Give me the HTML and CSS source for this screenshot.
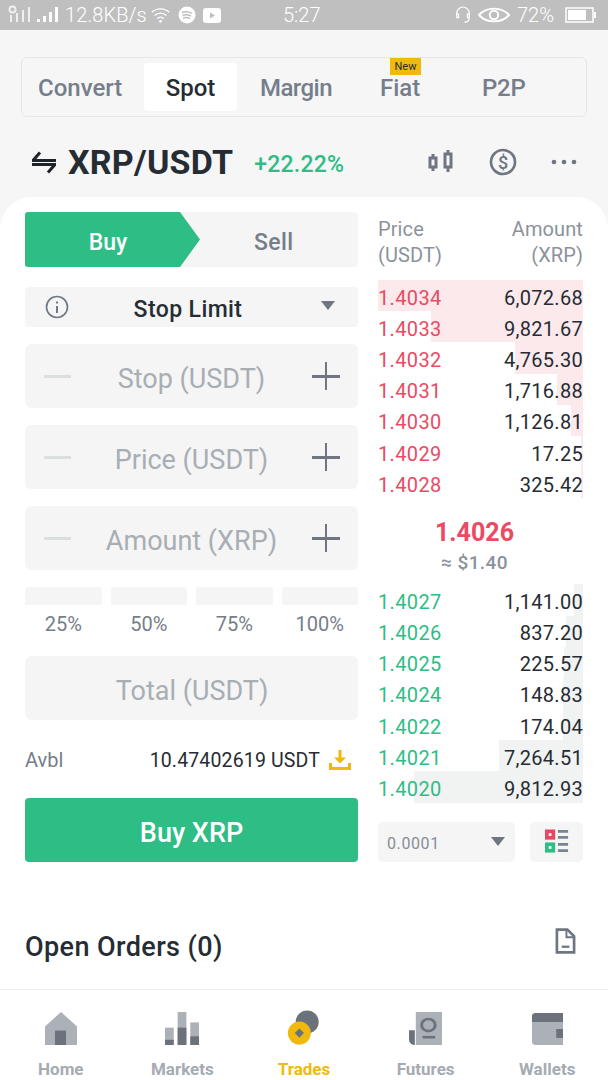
FILE: index.html
```html
<!DOCTYPE html>
<html lang="en">
<head>
<meta charset="utf-8">
<title>Spot</title>
<link rel="stylesheet" href="styles.css">
</head>
<body>
<div class="phone">
  <header class="status">
    <div class="st-left">
      <svg class="st-sig" width="24" height="20" viewBox="0 0 24 20"><g fill="#fff" opacity=".75"><circle cx="4.500" cy="4.500" r="3" fill="none" stroke="#fff" stroke-width="2"/><rect x="2" y="10" width="2" height="7"/><rect x="8" y="8" width="2" height="9"/><rect x="14" y="5" width="2" height="12"/><rect x="20" y="2" width="2" height="15"/></g></svg>
      <svg class="st-sig2" width="22" height="18" viewBox="0 0 22 18"><g fill="#fff"><rect x="0" y="13" width="3" height="3"/><rect x="6" y="10" width="3" height="6"/><rect x="12" y="6" width="3" height="10"/><rect x="18" y="1" width="3" height="15"/></g></svg>
      <span class="st-speed">12.8KB/s</span>
      <svg class="st-wifi" width="20" height="20" viewBox="0 0 22 20"><g fill="none" stroke="#fff" stroke-width="1.600"><path d="M1 7a14 14 0 0 1 19 0"/><path d="M4 10.500a9.500 9.500 0 0 1 13 0"/><path d="M7 14a5 5 0 0 1 7 0"/></g><circle cx="10.500" cy="17" r="1.600" fill="#fff"/></svg>
      <svg class="st-app" width="18" height="18" viewBox="0 0 18 18"><circle cx="9" cy="9" r="8.500" fill="#fff"/><g fill="none" stroke="#bfbfbf" stroke-width="1.500"><path d="M4 6.500c3-1 7-.8 10 .8"/><path d="M4.500 9.300c2.700-.8 6-.6 8.500.7"/><path d="M5 12c2.200-.6 5-.5 7 .6"/></g></svg>
      <svg class="st-app" width="18" height="15" viewBox="0 0 18 15"><rect width="18" height="15" rx="3" fill="#fff"/><path d="M7 4.500v6l5-3z" fill="#bfbfbf"/></svg>
    </div>
    <span class="st-time">5:27</span>
    <div class="st-right">
      <svg width="16" height="22" viewBox="0 0 18 22"><path d="M2 14V9a7 7 0 0 1 14 0v5c0 3-2 5-5 5M2 14h2v-4H2M16 14h-2v-4h2" fill="none" stroke="#fff" stroke-width="1.400" stroke-linecap="round"/></svg>
      <svg width="32" height="18" viewBox="0 0 34 18"><path d="M1 9c8-9 24-9 32 0c-8 9-24 9-32 0z" fill="none" stroke="#fff" stroke-width="2"/><circle cx="17" cy="9" r="4.500" fill="none" stroke="#fff" stroke-width="2"/></svg>
      <span class="st-batt">72%</span>
      <svg width="32" height="16" viewBox="0 0 32 16"><rect x="1" y="1" width="27" height="14" fill="none" stroke="#fff" stroke-width="1.500"/><rect x="3" y="3" width="18" height="10" fill="#fff"/><rect x="29" y="5" width="2" height="6" fill="#fff"/></svg>
    </div>
  </header>

  <nav class="tabs">
    <span class="tab tab-convert">Convert</span>
    <span class="tab tab-spot">Spot</span>
    <span class="tab tab-margin">Margin</span>
    <span class="tab tab-fiat">Fiat<em class="badge">New</em></span>
    <span class="tab tab-p2p">P2P</span>
  </nav>

  <section class="pair">
    <svg class="swap" width="26" height="24" viewBox="0 0 26 24"><path d="M1 10.500h24M2 10.500l7-8M25 14.500H1M24 14.500l-7 8" fill="none" stroke="#1e2329" stroke-width="3"/></svg>
    <h1 class="symbol">XRP/USDT</h1>
    <span class="change">+22.22%</span>
    <div class="pair-icons">
      <svg width="26" height="26" viewBox="0 0 26 26"><g fill="none" stroke="#6f7682" stroke-width="3"><rect x="2" y="9" width="6" height="9"/><rect x="17" y="5" width="6" height="13"/></g><path d="M5 5v4M5 18v4M20 1v4M20 18v5" stroke="#6f7682" stroke-width="3"/></svg>
      <svg class="ic-dollar" width="28" height="28" viewBox="0 0 28 28"><circle cx="14" cy="14" r="12" fill="none" stroke="#6f7682" stroke-width="2.600"/><text x="14" y="20.500" text-anchor="middle" class="dollar">$</text></svg>
      <svg width="28" height="8" viewBox="0 0 28 8"><g fill="#6f7682"><circle cx="4" cy="4" r="2.300"/><circle cx="14" cy="4" r="2.300"/><circle cx="24" cy="4" r="2.300"/></g></svg>
    </div>
  </section>

  <main class="card">
    <div class="trade">
      <div class="form">
        <div class="side">
          <svg class="side-bg" width="175" height="55" viewBox="0 0 175 55"><path d="M3 0H155L175 27.500L155 55H3a3 3 0 0 1-3-3V3a3 3 0 0 1 3-3z" fill="#2ebd85"/></svg>
          <span class="side-buy">Buy</span>
          <span class="side-sell">Sell</span>
        </div>
        <div class="select">
          <svg width="24" height="24" viewBox="0 0 24 24"><circle cx="12" cy="12" r="10.500" fill="none" stroke="#707a86" stroke-width="1.700"/><path d="M12 11v7M12 6.500v2" stroke="#707a86" stroke-width="2"/></svg>
          <span class="select-label">Stop Limit</span>
          <i class="caret"></i>
        </div>
        <div class="field">
          <i class="minus"></i><span class="ph">Stop (USDT)</span><i class="plus"></i>
        </div>
        <div class="field">
          <i class="minus"></i><span class="ph">Price (USDT)</span><i class="plus"></i>
        </div>
        <div class="field">
          <i class="minus"></i><span class="ph">Amount (XRP)</span><i class="plus"></i>
        </div>
        <div class="pcts">
          <div class="pct"><i></i><span>25%</span></div>
          <div class="pct"><i></i><span>50%</span></div>
          <div class="pct"><i></i><span>75%</span></div>
          <div class="pct"><i></i><span>100%</span></div>
        </div>
        <div class="field total"><span class="ph">Total (USDT)</span></div>
        <div class="avbl">
          <span class="avbl-k">Avbl</span>
          <span class="avbl-v">10.47402619 USDT</span>
          <svg width="22" height="22" viewBox="0 0 22 22"><path d="M11 1v10" stroke="#f0b90b" stroke-width="3"/><path d="M5 8.500l6 6 6-6z" fill="#f0b90b"/><path d="M1.500 14v5.500h19V14" fill="none" stroke="#f0b90b" stroke-width="3"/></svg>
        </div>
        <div class="buy-btn">Buy XRP</div>
      </div>

      <aside class="book">
        <div class="book-head">
          <span>Price<br>(USDT)</span>
          <span class="r">Amount<br>(XRP)</span>
        </div>
        <div class="rows asks">
          <div class="row" style="--d:205px"><b>1.4034</b><span>6,072.68</span></div>
          <div class="row" style="--d:152px"><b>1.4033</b><span>9,821.67</span></div>
          <div class="row" style="--d:68px"><b>1.4032</b><span>4,765.30</span></div>
          <div class="row" style="--d:26px"><b>1.4031</b><span>1,716.88</span></div>
          <div class="row" style="--d:12px"><b>1.4030</b><span>1,126.81</span></div>
          <div class="row" style="--d:2px"><b>1.4029</b><span>17.25</span></div>
          <div class="row" style="--d:2px"><b>1.4028</b><span>325.42</span></div>
        </div>
        <div class="mid">
          <strong>1.4026</strong>
          <span>≈ $1.40</span>
        </div>
        <div class="rows bids">
          <div class="row" style="--d:9px"><b>1.4027</b><span>1,141.00</span></div>
          <div class="row" style="--d:17px"><b>1.4026</b><span>837.20</span></div>
          <div class="row" style="--d:19px"><b>1.4025</b><span>225.57</span></div>
          <div class="row" style="--d:20px"><b>1.4024</b><span>148.83</span></div>
          <div class="row" style="--d:20px"><b>1.4022</b><span>174.04</span></div>
          <div class="row" style="--d:84px"><b>1.4021</b><span>7,264.51</span></div>
          <div class="row" style="--d:169px"><b>1.4020</b><span>9,812.93</span></div>
        </div>
        <div class="book-ctl">
          <div class="depth"><span>0.0001</span><i class="caret"></i></div>
          <div class="layout-btn">
            <svg width="24" height="25" viewBox="0 0 26 26"><path fill="#e8475f" d="M0 0h11v11H0z"/><path fill="#fff" d="M4 4h3v3H4z"/><path fill="#2ebd85" d="M0 14h11v11H0z"/><path fill="#fff" d="M4 18h3v3H4z"/><path stroke="#7b8390" stroke-width="3" d="M14 2h11M14 8.500h11M14 16h11M14 23h11"/></svg>
          </div>
        </div>
      </aside>
    </div>

    <section class="orders">
      <h2>Open Orders (0)</h2>
      <svg width="21" height="28" viewBox="0 0 22 28"><path d="M2 2h11l7 7v17H2z" fill="none" stroke="#6f7682" stroke-width="2.800"/><path d="M12 2v8h8" fill="none" stroke="#6f7682" stroke-width="2"/><path d="M7 20h8" stroke="#6f7682" stroke-width="2.400"/></svg>
    </section>
  </main>

  <footer class="nav">
    <div class="nav-item">
      <svg width="32" height="33" viewBox="0 0 32 32" preserveAspectRatio="none"><path d="M16 0L32 14V32H0V14z" fill="#acb1b8"/><rect x="10" y="18" width="11" height="14" fill="#6c727c"/></svg>
      <span>Home</span>
    </div>
    <div class="nav-item">
      <svg width="35" height="33" viewBox="0 0 36 38" preserveAspectRatio="none"><g fill="#acb1b8"><rect x="0" y="18" width="9" height="20"/><rect x="13" y="0" width="9" height="38"/><rect x="26" y="12" width="9" height="26"/></g><g fill="#6c727c"><rect x="0" y="32" width="9" height="6"/><rect x="13" y="18" width="9" height="20"/><rect x="26" y="28" width="9" height="10"/></g></svg>
      <span>Markets</span>
    </div>
    <div class="nav-item active">
      <svg width="33" height="35" viewBox="0 0 34 38"><circle cx="21" cy="13" r="12.500" fill="#6c727c"/><circle cx="12.500" cy="25" r="12.500" fill="#f0b90b"/><path d="M12.500 20l5 5-5 5-5-5z" fill="#6c727c"/></svg>
      <span>Trades</span>
    </div>
    <div class="nav-item">
      <svg width="33" height="33" viewBox="0 0 34 38" preserveAspectRatio="none"><path d="M7 0h27v38H7z" fill="#acb1b8"/><circle cx="20" cy="15" r="7" fill="none" stroke="#6c727c" stroke-width="3"/><path d="M14 29h13" stroke="#6c727c" stroke-width="3"/><path d="M0 21h6v17a6 6 0 0 1-6-6z" fill="#6c727c"/></svg>
      <span>Futures</span>
    </div>
    <div class="nav-item">
      <svg width="31" height="32" viewBox="0 0 32 36" preserveAspectRatio="none"><path d="M0 4a4 4 0 0 1 4-4h28v36H4a4 4 0 0 1-4-4z" fill="#acb1b8"/><path d="M0 4a4 4 0 0 1 4-4h28v10H0z" fill="#6c727c"/><rect x="25" y="18" width="7" height="10" fill="#6c727c"/></svg>
      <span>Wallets</span>
    </div>
  </footer>
</div>
</body>
</html>
```

FILE: styles.css
```css
* { box-sizing: border-box; }
html, body { margin: 0; padding: 0; }
body { font-family: Roboto, "Liberation Sans", sans-serif; background: #fff; color: #262c33; }
.phone { width: 608px; height: 1080px; overflow: hidden; background: #f6f6f6; display: flex; flex-direction: column; }

.status { height: 30px; flex: none; background: #bfbfbf; color: #fff; display: flex; align-items: center; padding: 0 11px 0 8px; position: relative; }
.st-left, .st-right { display: flex; align-items: center; gap: 5px; }
.st-right { margin-left: auto; gap: 7px; }
.st-speed { font-size: 20px; font-weight: 300; margin: 0 0 0 1px; letter-spacing: .1px; }
.st-wifi { margin-left: -1px; }
.st-app { margin-left: 2px; }
.st-time { position: absolute; left: 283px; font-size: 20px; font-weight: 300; }
.st-batt { font-size: 20px; font-weight: 300; margin-right: 4px; }

.tabs { margin: 27px 21px 0; height: 60px; flex: none; border: 1px solid #e7e7e7; border-radius: 6px; position: relative; display: flex; align-items: center; }
.tab { font-size: 24px; font-weight: 500; color: #757e8a; position: absolute; top: 5px; height: 48px; line-height: 50px; }
.tab-convert { left: 16px; }
.tab-spot { left: 122px; width: 93px; text-align: center; background: #fff; color: #262c33; border-radius: 4px; }
.tab-margin { left: 238px; letter-spacing: -.55px; }
.tab-fiat { left: 358px; }
.tab-p2p { left: 460px; letter-spacing: -.2px; }
.badge { position: absolute; left: 10px; top: -5px; width: 31px; height: 17px; background: #f0b90b; color: #262c33; font-size: 11px; font-style: normal; font-weight: 400; line-height: 17px; text-align: center; }

.pair { height: 80px; flex: none; display: flex; align-items: center; padding: 9px 30px 0 31px; position: relative; }
.swap { margin-right: 11px; }
.symbol { margin: 0; font-size: 34px; font-weight: 700; line-height: 40px; letter-spacing: .25px; }
.change { font-size: 23px; font-weight: 500; color: #2ebd85; margin: 6px 0 0 21px; letter-spacing: .2px; }
.pair-icons { margin-left: auto; display: flex; align-items: center; gap: 34px; }
.ic-dollar { margin: 0 -1px 0 1px; }
.dollar { font: 500 18px Roboto, sans-serif; fill: #6f7682; }

.card { flex: 1; background: #fff; border-radius: 32px 32px 0 0; padding: 15px 25px 0; display: flex; flex-direction: column; }
.trade { display: flex; justify-content: space-between; }
.form { width: 333px; display: flex; flex-direction: column; }

.side { height: 55px; background: #f5f5f5; border-radius: 4px; position: relative; display: flex; align-items: center; font-size: 23px; font-weight: 500; padding-top: 6px; }
.side-bg { position: absolute; left: 0; top: 0; }
.side-buy { position: relative; color: #fff; width: 166px; text-align: center; }
.side-sell { position: relative; color: #757e8a; margin-left: 63px; letter-spacing: .4px; }

.select { margin-top: 20px; height: 40px; background: #f5f5f5; border-radius: 4px; display: flex; align-items: center; padding: 0 23px 0 20px; position: relative; }
.select-label { flex: 1; text-align: center; font-size: 23px; font-weight: 500; color: #262c33; padding: 4px 14px 0 0; letter-spacing: .4px; }
.caret { display: block; width: 0; height: 0; border: 7px solid transparent; border-top: 9px solid #6f7682; border-bottom: 0; }
.select .caret { margin-top: -4px; }

.field { margin-top: 17px; height: 64px; background: #f5f5f5; border-radius: 6px; display: flex; align-items: center; padding: 0 18px 0 19px; }
.ph { flex: 1; text-align: center; font-size: 27px; color: #a8aeb3; padding-top: 6px; }
.minus { display: block; width: 27px; height: 3px; background: #dcdfdf; }
.plus { display: block; width: 28px; height: 28px; position: relative; background: linear-gradient(#6f7682, #6f7682) center / 100% 3px no-repeat, linear-gradient(#6f7682, #6f7682) center / 2px 100% no-repeat; }

.pcts { margin-top: 17px; display: flex; gap: 9px; }
.pct { flex: 1; display: flex; flex-direction: column; align-items: center; }
.pct i { display: block; width: 100%; height: 18px; background: #f5f5f5; border-radius: 3px 3px 0 0; }
.pct span { margin-top: 7px; font-size: 20px; line-height: 24px; color: #757e8a; }

.total { margin-top: 20px; }

.avbl { margin-top: 26px; height: 28px; display: flex; align-items: center; font-size: 20px; }
.avbl-k { color: #757e8a; }
.avbl-v { margin-left: auto; color: #262c33; font-size: 19.500px; letter-spacing: .15px; margin-right: 9px; }
.avbl svg { margin-right: 7px; }

.buy-btn { margin-top: 24px; height: 64px; background: #2ebd85; color: #fff; border-radius: 4px; font-size: 27px; font-weight: 500; text-align: center; line-height: 70px; }

.book { width: 205px; display: flex; flex-direction: column; }
.book-head { display: flex; justify-content: space-between; font-size: 20px; line-height: 26px; color: #8b929c; height: 68px; padding-top: 4px; letter-spacing: .1px; }
.book-head .r { text-align: right; }
.rows { display: flex; flex-direction: column; }
.row { height: 31.2px; display: flex; justify-content: space-between; align-items: center; font-size: 20px; letter-spacing: .3px; padding: 4px 0 0 0; background-repeat: no-repeat; background-position: right top; background-size: var(--d) 100%; }
.row b { font-weight: 400; letter-spacing: .35px; }
.asks .row { background-image: linear-gradient(#fce9ec, #fce9ec); }
.asks b { color: #ea4a62; }
.bids .row { background-image: linear-gradient(#f1f2f2, #f1f2f2); }
.bids b { color: #2ebd85; }
.mid { height: 86px; display: flex; flex-direction: column; align-items: center; padding: 20px 12px 0 0; }
.mid strong { font-size: 25px; line-height: 30px; font-weight: 700; color: #ea4a62; letter-spacing: 0; }
.mid span { font-size: 19px; line-height: 28px; margin-top: 1px; color: #8b929c; font-weight: 500; letter-spacing: .4px; }

.book-ctl { margin-top: 19px; display: flex; justify-content: space-between; height: 40px; }
.depth { width: 137px; background: #f5f5f5; border-radius: 5px; display: flex; align-items: center; justify-content: space-between; padding: 4px 10px 0 9px; font-size: 16px; letter-spacing: .6px; color: #868d97; }
.depth .caret { margin-top: -4px; }
.layout-btn { width: 53px; background: #f5f5f5; border-radius: 5px; display: flex; align-items: center; justify-content: center; }

.orders { margin-top: 61px; display: flex; align-items: center; justify-content: space-between; padding-right: 7px; height: 48px; }
.orders h2 { margin: 0; font-size: 27px; font-weight: 500; color: #262c33; letter-spacing: .4px; }
.orders svg { margin: -12px 0 0 0; }

.nav { height: 91px; flex: none; background: #fff; border-top: 1px solid #ececec; display: grid; grid-template-columns: repeat(5, 1fr); }
.nav-item { display: flex; flex-direction: column; align-items: center; justify-content: flex-end; gap: 14px; padding-bottom: 1px; color: #a5abb1; font-size: 17px; font-weight: 700; }
.nav-item span { line-height: 20px; }
.nav-item.active { color: #f0b90b; }
```
